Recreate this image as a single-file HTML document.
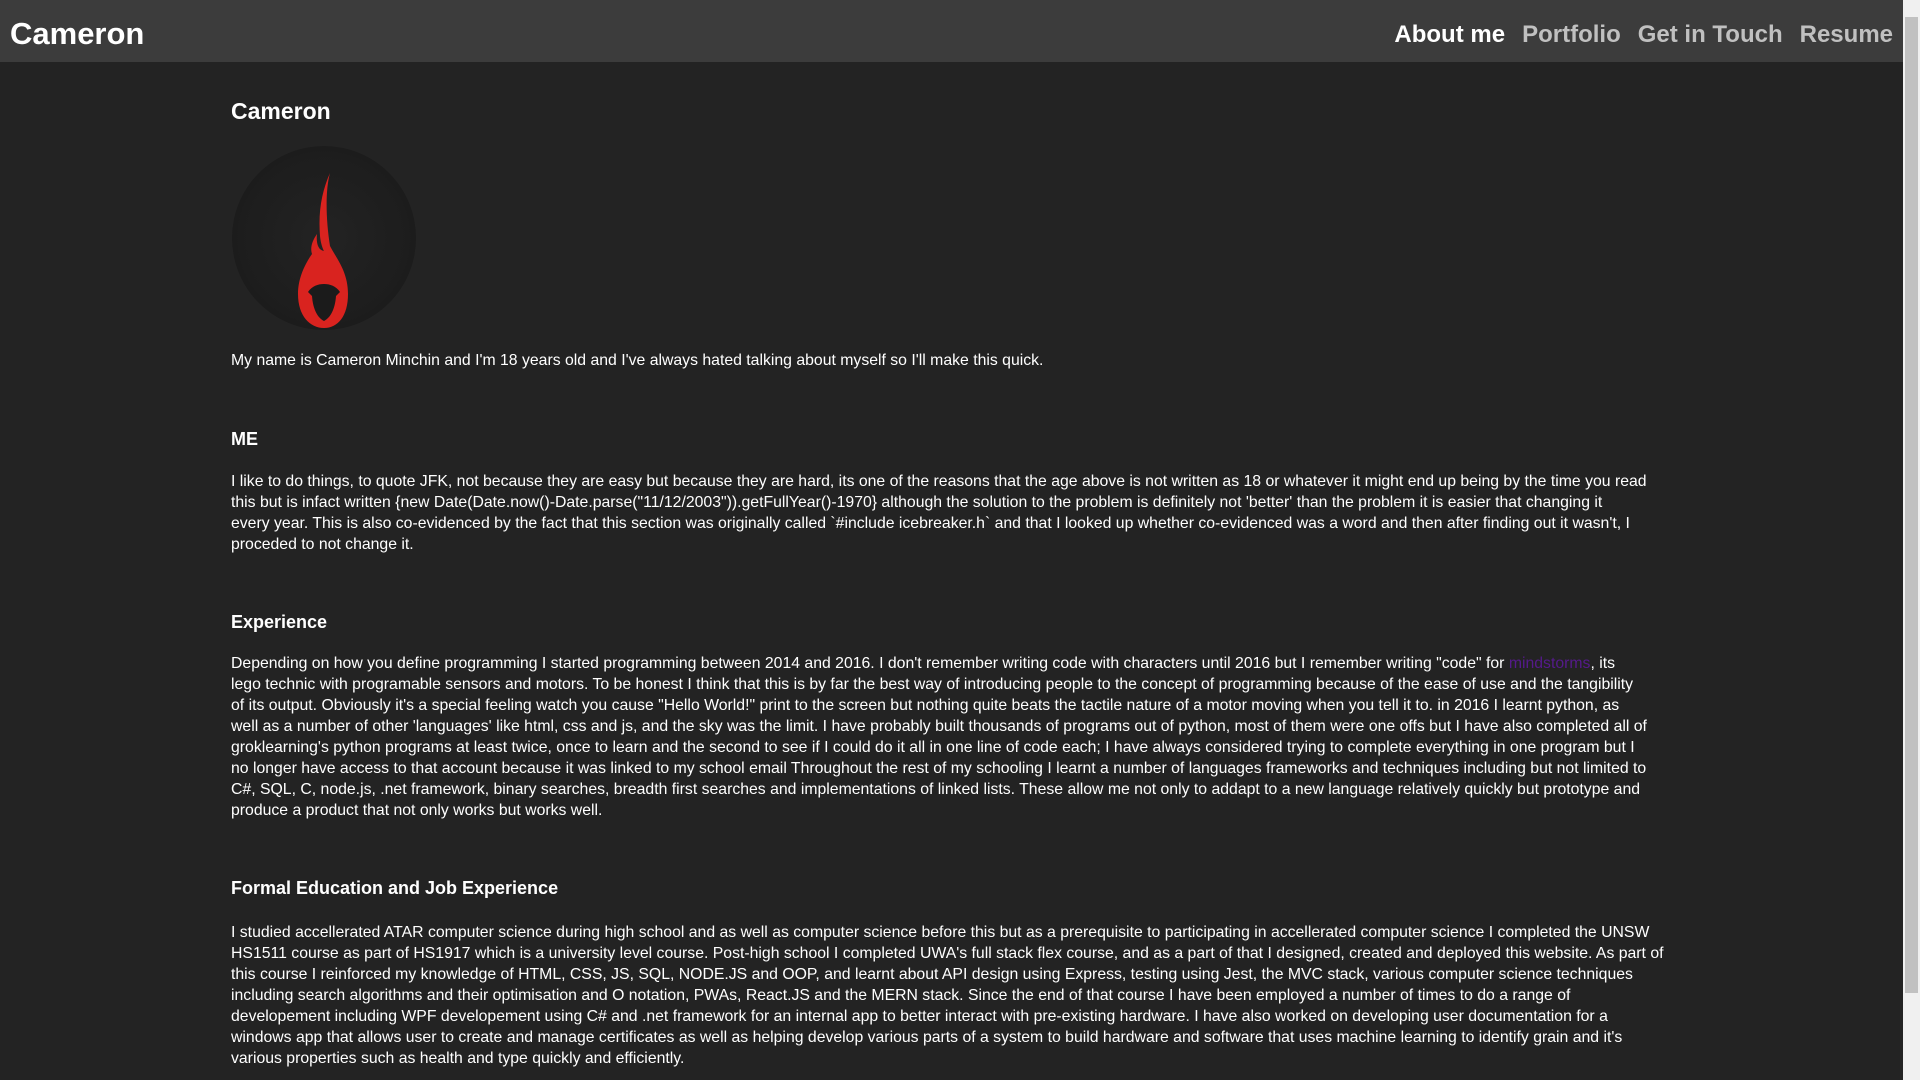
<!DOCTYPE html>
<html><head><meta charset="utf-8"><style>
html,body{margin:0;padding:0;}
body{width:1920px;height:1080px;overflow:hidden;background:#232323;font-family:"Liberation Sans",sans-serif;color:#fff;position:relative;}
.hdr{position:absolute;left:0;top:0;width:1903px;height:62px;background:#3c3c3c;}
.logo{position:absolute;left:10px;top:16px;font-size:31px;font-weight:bold;}
.nav{position:absolute;right:10px;top:21px;font-size:24px;font-weight:bold;color:#c0c0c0;white-space:nowrap;}
.nav span{margin-left:17px;}
.nav .a{color:#fff;}
.main{position:absolute;left:231px;top:101px;width:1450px;font-size:15.8px;line-height:21px;white-space:nowrap;}
h1{font-size:23px;margin:0;height:30px;}
h2{font-size:18px;margin:0;}
p{margin:0;}
.av{position:absolute;left:1px;top:15px;width:184px;height:184px;border-radius:50%;background:radial-gradient(circle at 50% 50%,#232323 0,#1d1d1d 65%,#141414 100%);}
.sb{position:absolute;right:0;top:0;width:17px;height:1080px;background:#f0f0f0;}
.th{position:absolute;left:2px;top:17px;width:13px;height:976px;background:#c1c1c1;}
a{color:#551a8b;text-decoration:none;}
</style></head><body>
<div class="hdr"><div class="logo">Cameron</div>
<div class="nav"><span class="a">About me</span><span>Portfolio</span><span>Get in Touch</span><span>Resume</span></div></div>
<div class="sb"><div class="th"></div></div>
<div class="main">
<h1>Cameron</h1>
<div style="position:relative;height:219px;">
<div class="av"><svg width="184" height="184" viewBox="0 0 184 184">
<path d="M98 27 C90 45 86 65 88 90 C89 100 92 105 92 105 C86 104 84 97 85 88 C80 95 78 102 80 108 C73 118 66 132 66 148 C66 170 78 182 92 182 C106 182 116 170 116 148 C116 125 104 112 98 100 C94 75 93 45 98 27Z" fill="#d9231f"/>
<path d="M76 146 C80 140 86 138 92 138 C98 138 104 140 108 146 L104 150 C103 164 98 172 92 175 C86 172 81 164 80 150Z" fill="#1b1b1b"/>
</svg></div>
</div>
<p>My name is Cameron Minchin and I'm 18 years old and I've always hated talking about myself so I'll make this quick.</p>
<h2 style="margin-top:58px">ME</h2>
<p style="margin-top:21px">I like to do things, to quote JFK, not because they are easy but because they are hard, its one of the reasons that the age above is not written as 18 or whatever it might end up being by the time you read<br>this but is infact written {new Date(Date.now()-Date.parse("11/12/2003")).getFullYear()-1970} although the solution to the problem is definitely not 'better' than the problem it is easier that changing it<br>every year. This is also co-evidenced by the fact that this section was originally called `#include icebreaker.h` and that I looked up whether co-evidenced was a word and then after finding out it wasn't, I<br>proceded to not change it.</p>
<h2 style="margin-top:57px">Experience</h2>
<p style="margin-top:20px">Depending on how you define programming I started programming between 2014 and 2016. I don't remember writing code with characters until 2016 but I remember writing "code" for <a>mindstorms</a>, its<br>lego technic with programable sensors and motors. To be honest I think that this is by far the best way of introducing people to the concept of programming because of the ease of use and the tangibility<br>of its output. Obviously it's a special feeling watch you cause "Hello World!" print to the screen but nothing quite beats the tactile nature of a motor moving when you tell it to. in 2016 I learnt python, as<br>well as a number of other 'languages' like html, css and js, and the sky was the limit. I have probably built thousands of programs out of python, most of them were one offs but I have also completed all of<br>groklearning's python programs at least twice, once to learn and the second to see if I could do it all in one line of code each; I have always considered trying to complete everything in one program but I<br>no longer have access to that account because it was linked to my school email Throughout the rest of my schooling I learnt a number of languages frameworks and techniques including but not limited to<br>C#, SQL, C, node.js, .net framework, binary searches, breadth first searches and implementations of linked lists. These allow me not only to addapt to a new language relatively quickly but prototype and<br>produce a product that not only works but works well.</p>
<h2 style="margin-top:57px">Formal Education and Job Experience</h2>
<p style="margin-top:23px">I studied accellerated ATAR computer science during high school and as well as computer science before this but as a prerequisite to participating in accellerated computer science I completed the UNSW<br>HS1511 course as part of HS1917 which is a university level course. Post-high school I completed UWA's full stack flex course, and as a part of that I designed, created and deployed this website. As part of<br>this course I reinforced my knowledge of HTML, CSS, JS, SQL, NODE.JS and OOP, and learnt about API design using Express, testing using Jest, the MVC stack, various computer science techniques<br>including search algorithms and their optimisation and O notation, PWAs, React.JS and the MERN stack. Since the end of that course I have been employed a number of times to do a range of<br>developement including WPF developement using C# and .net framework for an internal app to better interact with pre-existing hardware. I have also worked on developing user documentation for a<br>windows app that allows user to create and manage certificates as well as helping develop various parts of a system to build hardware and software that uses machine learning to identify grain and it's<br>various properties such as health and type quickly and efficiently.</p>
</div>
</body></html>
